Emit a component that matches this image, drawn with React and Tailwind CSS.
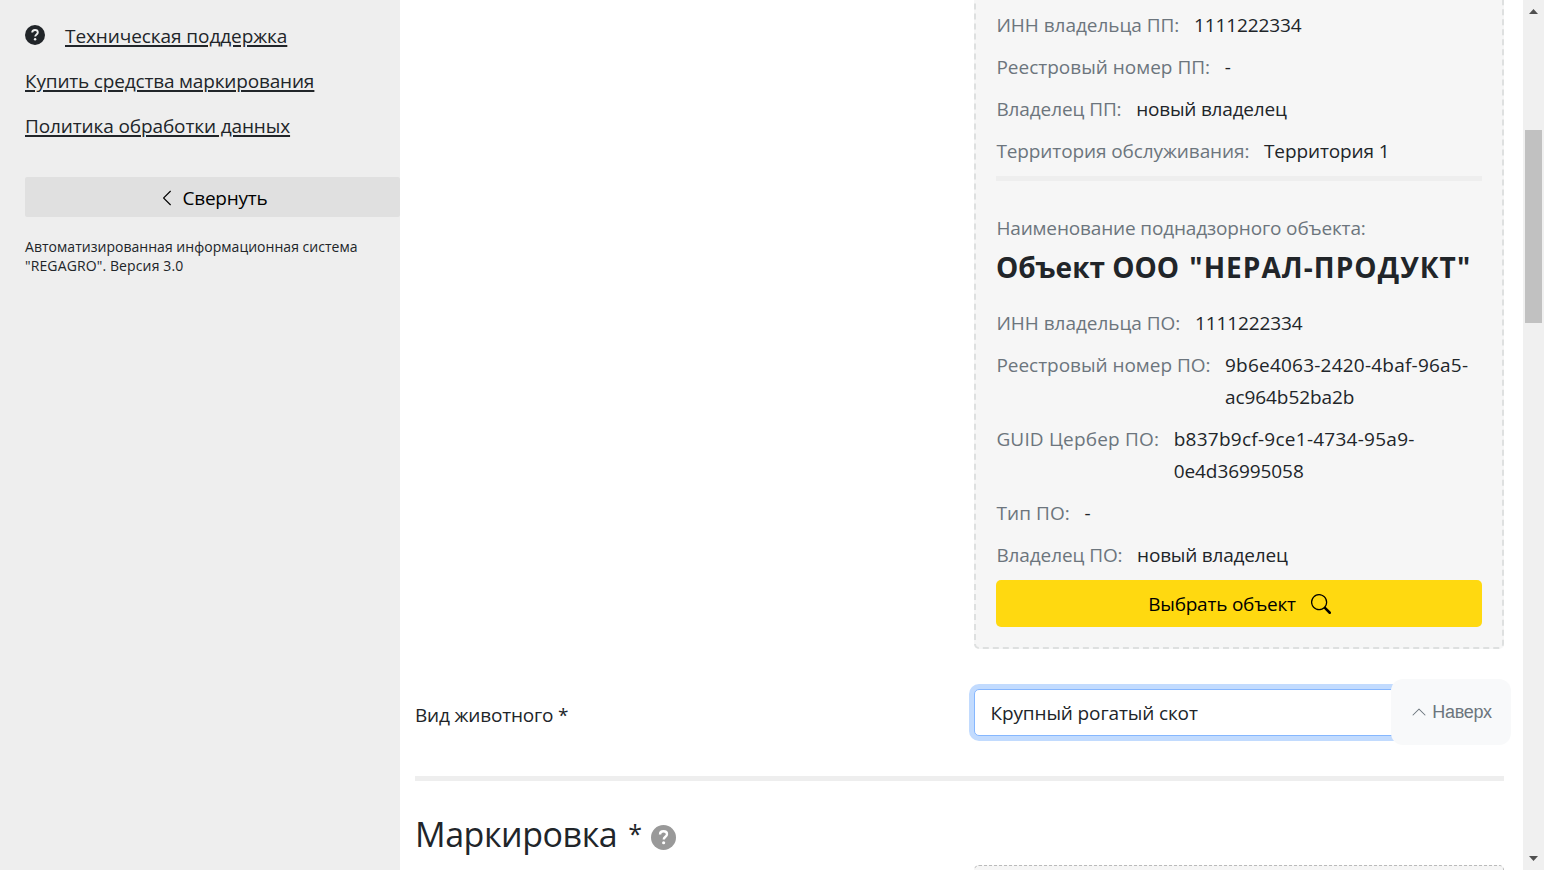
import { BsChevronLeft, BsChevronUp, BsSearch } from "react-icons/bs";

function QuestionIcon({ className, mark }) {
  return (
    <svg className={className} viewBox="0 0 20 20" fill="none">
      <circle cx="10" cy="10" r="10" fill="currentColor" />
      <path d="M7.2 7.6C7.2 5.9 8.3 5 10 5s2.8.9 2.8 2.4c0 2-2.6 2-2.6 4.1" stroke={mark} strokeWidth="1.9" />
      <circle cx="10.1" cy="14.2" r="1.25" fill={mark} />
    </svg>
  );
}

function Field({ label, children, tight, labelClass = "" }) {
  return (
    <div className={tight ? "flex gap-[15px] leading-8" : "mb-2.5 flex gap-[15px] leading-8"}>
      <span className={`-mr-[0.4px] shrink-0 pl-[0.4px] whitespace-nowrap text-[#6c757d] ${labelClass}`}>{label}</span>
      <span className="text-[#212529]">{children}</span>
    </div>
  );
}

function Sidebar() {
  return (
    <aside className="flex w-[400px] shrink-0 flex-col bg-[#eeeeee] pl-[25px]">
      <nav className="flex flex-col gap-[15px] pt-[21px] leading-[30px] underline decoration-2 underline-offset-2">
        <div className="flex items-center">
          <QuestionIcon className="mr-5 mb-0.5 size-5" mark="#eeeeee" />
          <a className="tracking-[-0.08px]">Техническая поддержка</a>
        </div>
        <a className="tracking-[-0.17px]">Купить средства маркирования</a>
        <a className="tracking-[-0.12px]">Политика обработки данных</a>
      </nav>
      <button className="mt-9 flex h-10 items-center justify-center rounded-xs bg-[#e0e0e0] pt-0.5 tracking-[-0.25px] text-black">
        <BsChevronLeft className="mr-[7px] size-[18px]" />
        Свернуть
      </button>
      <p className="mt-5 text-sm leading-[19px] tracking-[0.03px]">
        Автоматизированная информационная система
        <br />
        <span className="tracking-[0.12px]">"REGAGRO". Версия 3.0</span>
      </p>
    </aside>
  );
}

function ObjectCard() {
  return (
    <section className="-mt-5 flex h-[669px] w-[530px] flex-col rounded-[5px] border-2 border-dashed border-[#dee0e0] bg-[#f6f6f6] px-5 pt-[27px]">
      <Field label="ИНН владельца ПП:" labelClass="tracking-[-0.03px]"><span className="tracking-[-0.1px]">1111222334</span></Field>
      <Field label="Реестровый номер ПП:">-</Field>
      <Field label="Владелец ПП:" labelClass="tracking-[-0.1px]"><span className="tracking-[-0.2px]">новый владелец</span></Field>
      <Field label="Территория обслуживания:" labelClass="tracking-[-0.1px]" tight><span className="tracking-[-0.1px]">Территория 1</span></Field>
      <hr className="mt-[9px] h-[5px] shrink-0 border-0 bg-[#eeeeee]" />
      <div className="mt-[31px] pl-[0.4px] leading-8 tracking-[-0.15px] text-[#6c757d]">Наименование поднадзорного объекта:</div>
      <h2 className="mt-px mb-[18px] whitespace-nowrap text-[28px] leading-[44px] font-bold">
        Объект ООО <span className="ml-[3px] tracking-[1.05px]">"НЕРАЛ-ПРОДУКТ"</span>
      </h2>
      <Field label="ИНН владельца ПО:" labelClass="tracking-[-0.03px]"><span className="tracking-[-0.1px]">1111222334</span></Field>
      <Field label="Реестровый номер ПО:" labelClass="tracking-[-0.03px]">
        <span className="tracking-[0.22px]">9b6e4063-2420-4baf-96a5-</span>
        <br />
        <span className="tracking-[-0.08px]">ac964b52ba2b</span>
      </Field>
      <Field label="GUID Цербер ПО:" labelClass="tracking-[0.17px]">
        <span className="tracking-[0.26px]">b837b9cf-9ce1-4734-95a9-</span>
        <br />
        <span className="tracking-[-0.08px]">0e4d36995058</span>
      </Field>
      <Field label="Тип ПО:" labelClass="tracking-[0.1px]">-</Field>
      <Field label="Владелец ПО:" labelClass="tracking-[-0.1px]" tight><span className="tracking-[-0.2px]">новый владелец</span></Field>
      <button className="mt-[9px] flex h-[47px] shrink-0 items-center justify-center gap-[15px] rounded-[5px] bg-[#ffd910] pl-px text-black">
        <span className="pt-0.5 tracking-[-0.22px]">Выбрать объект</span>
        <BsSearch className="size-5" />
      </button>
    </section>
  );
}

export default function App() {
  return (
    <div className="relative flex h-[870px] w-[1544px] overflow-hidden bg-white font-['Open_Sans','Noto_Sans',sans-serif] text-[19px] text-[#212529]">
      <Sidebar />
      <main className="flex w-[1123px] shrink-0 flex-col pr-[19px] pl-[15px]">
        <div className="flex justify-end"><ObjectCard /></div>
        <div className="mt-10 flex h-[47px] shrink-0 items-center justify-between">
          <label className="pt-1.5 tracking-[-0.18px]">Вид животного *</label>
          <div className="flex h-[47px] w-[530px] items-center rounded-[5px] border border-[#86b7fe] bg-white px-[15.5px] pt-0.5 tracking-[-0.13px] ring-[5px] ring-[#c2dbfe]">
            Крупный рогатый скот
          </div>
        </div>
        <hr className="mt-10 h-[5px] shrink-0 border-0 bg-[#eeeeee]" />
        <div className="mt-8 flex h-[52px] shrink-0 items-center">
          <h1 className="flex pb-[11px] text-[34px] leading-[48px] tracking-[-0.45px]">
            Маркировка<span className="-mt-px ml-[11px] text-[25px]">*</span>
          </h1>
          <QuestionIcon className="mb-1 ml-[9.5px] size-[25px] text-[#999999]" mark="#ffffff" />
        </div>
        <div className="flex justify-end">
          <div className="h-10 w-[530px] rounded-[5px] border border-dashed border-[#bbbbbb] bg-[#f6f6f6]" />
        </div>
      </main>
      <div className="flex w-[21px] shrink-0 flex-col items-center bg-[#f0f0f0]">
        <svg className="mt-[9px] h-[5px] w-[9px]" viewBox="0 0 9 5"><path d="M4.5 0 9 5H0Z" fill="#505050" /></svg>
        <div className="mt-[116px] h-[193px] w-[17px] bg-[#c1c1c1]" />
        <svg className="mt-auto mb-[9px] h-[5px] w-[9px]" viewBox="0 0 9 5"><path d="M0 0H9L4.5 5Z" fill="#505050" /></svg>
      </div>
      <button className="absolute top-[679px] left-[1391px] flex h-[66px] w-[120px] items-center justify-center gap-[5px] rounded-xl bg-[#f8f9fa] pl-px font-['Liberation_Sans',sans-serif] text-lg tracking-[-0.25px] text-[#6c757d]">
        <BsChevronUp className="size-4" />
        Наверх
      </button>
    </div>
  );
}
